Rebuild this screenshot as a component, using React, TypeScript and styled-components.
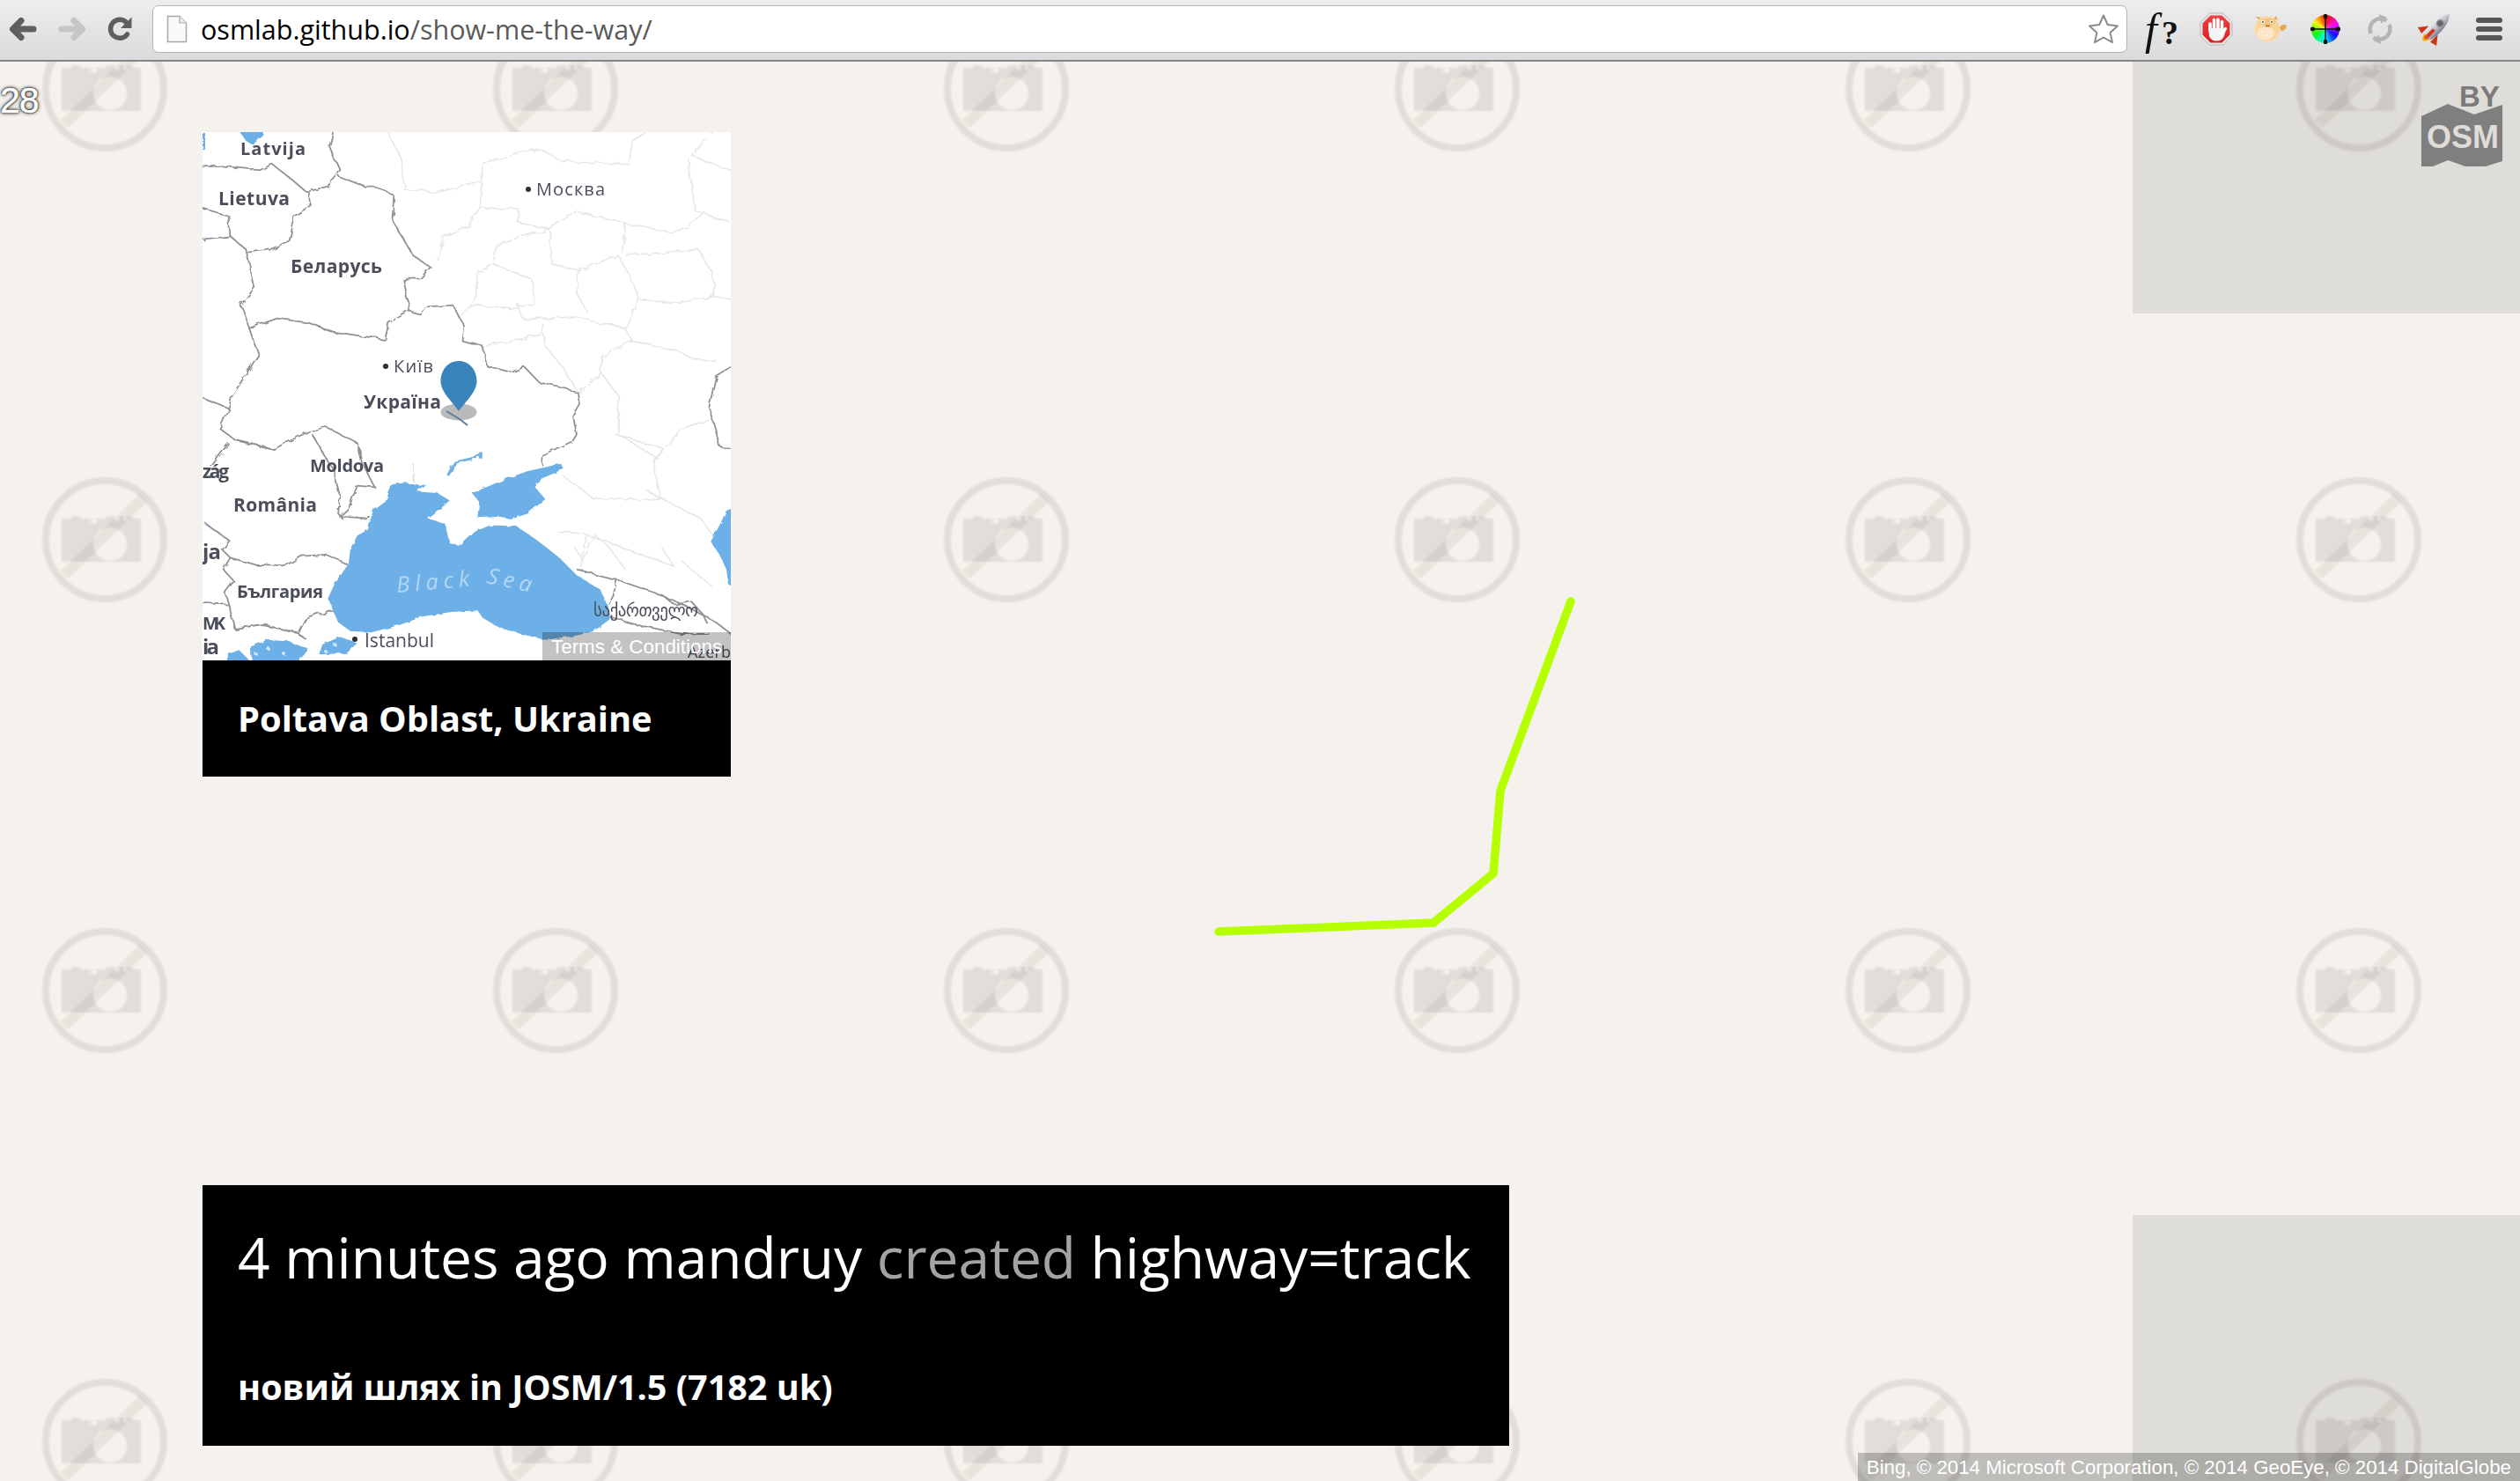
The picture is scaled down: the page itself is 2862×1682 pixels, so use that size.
import React from "react";
import styled, { createGlobalStyle } from "styled-components";

const GlobalStyle = createGlobalStyle`
  html, body { margin: 0; padding: 0; background: #f5f2ed; }
  body { font-family: "Open Sans", "Noto Sans", sans-serif; overflow: hidden; }
`;

const Page = styled.div`
  width: 100%;
  height: 100vh;
  display: flex;
  flex-direction: column;
  overflow: hidden;
`;

/* ---------- browser chrome ---------- */
const Toolbar = styled.header`
  box-sizing: border-box;
  height: 70px;
  flex: none;
  display: flex;
  align-items: center;
  padding: 0 4px 2px 10px;
  background: linear-gradient(#ededed, #dbdbdb);
  border-bottom: 2px solid #858585;
`;
const NavGroup = styled.nav`
  display: flex;
  align-items: center;
  gap: 24px;
  flex: none;
`;
const NavIcon = styled.svg`
  display: block;
  flex: none;
`;
const UrlBox = styled.div`
  box-sizing: border-box;
  flex: 1;
  height: 54px;
  margin: 0 8px 0 23px;
  display: flex;
  align-items: center;
  padding: 0 8px 0 15px;
  background: #fff;
  border: 1.5px solid #b4b4b4;
  border-radius: 7px;
`;
const UrlText = styled.div`
  flex: 1;
  margin-left: 15px;
  font-size: 30.5px;
  white-space: nowrap;
  color: #5a5a5a;
  b { font-weight: 400; color: #000; }
`;
const ExtSlot = styled.div`
  width: 62px;
  height: 54px;
  flex: none;
  display: flex;
  align-items: center;
  justify-content: center;
`;
const FunctionGlyph = styled.span`
  font-family: "Liberation Serif", serif;
  font-size: 50px;
  line-height: 1;
  color: #111;
  white-space: nowrap;
  i { font-style: italic; margin-right: 5px; }
  b { font-size: 38px; font-weight: 700; }
`;
const MenuIcon = styled.div`
  display: flex;
  flex-direction: column;
  gap: 4px;
  width: 30px;
`;
const MenuBar = styled.span`
  height: 6px;
  border-radius: 3px;
  background: #565656;
`;

/* ---------- map area ---------- */
const Viewport = styled.main`
  position: relative;
  flex: 1;
  min-height: 0;
  background: #f5f2ed;
`;
const FullLayer = styled.svg`
  position: absolute;
  left: 0;
  top: 0;
  width: 100%;
  height: 100%;
  pointer-events: none;
`;
const Content = styled.div`
  position: relative;
  height: 100%;
  display: flex;
  justify-content: space-between;
`;
const LeftColumn = styled.div`
  box-sizing: border-box;
  display: flex;
  flex-direction: column;
  justify-content: space-between;
  align-items: flex-start;
  padding: 80px 0 40px 230px;
`;
const SideStrip = styled.aside`
  width: 440px;
  display: flex;
  flex-direction: column;
  justify-content: space-between;
`;
const SidePanel = styled.div<{ $h: number }>`
  height: ${(p) => p.$h}px;
  background: rgba(0, 0, 0, 0.085);
`;
const Counter = styled.div`
  position: absolute;
  left: 0;
  top: 22px;
  font-family: "Liberation Sans", Arial, sans-serif;
  font-size: 41px;
  line-height: 44px;
  letter-spacing: -1px;
  color: #fff;
  -webkit-text-stroke: 0.5px #fff;
  text-shadow: 0 0 2px #000, 0 0 3px #000, 0 0 5px rgba(0, 0, 0, 0.7);
`;
const LogoMark = styled.svg`
  position: absolute;
  right: 20px;
  top: 18px;
`;
const Attribution = styled.div`
  position: absolute;
  right: 0;
  bottom: 0;
  box-sizing: border-box;
  height: 32px;
  padding: 2px 10px 0;
  display: flex;
  align-items: center;
  background: rgba(0, 0, 0, 0.22);
  color: #fff;
  font-family: "Liberation Sans", Arial, sans-serif;
  font-size: 22.3px;
  white-space: nowrap;
`;

/* ---------- location card ---------- */
const LocationCard = styled.section`
  width: 600px;
`;
const MapBox = styled.div`
  position: relative;
  width: 600px;
  height: 600px;
  overflow: hidden;
  background: #fff;
`;
const MapDrawing = styled.svg`
  display: block;
`;
const MapLabel = styled.text<{ $weight?: number }>`
  font-family: "Open Sans", sans-serif;
  font-weight: ${(p) => p.$weight ?? 700};
  fill: #4b4e5a;
`;
const GeorgianLabel = styled.text`
  font-family: "DejaVu Sans", sans-serif;
  fill: #4b4e5a;
`;
const SeaLabel = styled.text`
  font-family: "Open Sans", sans-serif;
  font-style: italic;
  fill: #b4d8f3;
`;
const TermsLink = styled.div`
  position: absolute;
  right: 0;
  bottom: 0;
  width: 214px;
  height: 32px;
  box-sizing: border-box;
  padding: 2px 0 0 10px;
  display: flex;
  align-items: center;
  background: rgba(0, 0, 0, 0.24);
  color: #fff;
  font-family: "Liberation Sans", Arial, sans-serif;
  font-size: 22.4px;
  white-space: nowrap;
`;
const PlaceCaption = styled.h2`
  box-sizing: border-box;
  margin: 0;
  height: 132px;
  padding: 0 40px 2px;
  display: flex;
  align-items: center;
  background: #000;
  color: #fff;
  font-size: 39.8px;
  font-weight: 700;
  white-space: nowrap;
`;

/* ---------- change card ---------- */
const ChangeCard = styled.section`
  box-sizing: border-box;
  width: 1484px;
  height: 296px;
  padding: 38px 40px 0;
  background: #000;
  color: #fff;
`;
const ChangeTitle = styled.h1`
  margin: 0;
  font-size: 64px;
  line-height: 88px;
  font-weight: 400;
  white-space: nowrap;
`;
const Verb = styled.span`
  color: #a3a3a3;
`;
const ChangeMeta = styled.p`
  margin: 76px 0 0;
  font-size: 39.5px;
  line-height: 54px;
  font-weight: 700;
  white-space: nowrap;
`;

/* ---------- data for the drawings ---------- */
type Pt = [number, number];
// points are read from crops of the reference: one for the north of the map, one for the south
const north = (pts: Pt[]) => pts.map(([x, y]) => `${(x / 2.529 - 10).toFixed(1)},${(y / 3 - 10).toFixed(1)}`).join(" ");
const south = (pts: Pt[]) => pts.map(([x, y]) => `${(x / 2.529 - 10).toFixed(1)},${(y / 3 + 330).toFixed(1)}`).join(" ");

const darkNorth: Pt[][] = [
  [[400, 30], [390, 80], [420, 160], [410, 180], [385, 215], [330, 232]],
  [[0, 150], [80, 145], [150, 155], [190, 160], [225, 140], [270, 180], [320, 230], [330, 232]],
  [[330, 232], [335, 285], [290, 320], [275, 400], [220, 430], [155, 440]],
  [[25, 290], [100, 315], [105, 385], [25, 395]],
  [[105, 385], [150, 430], [175, 560], [135, 620], [160, 700], [185, 790], [110, 930], [100, 970], [75, 1040]],
  [[415, 180], [490, 215], [520, 215], [575, 245], [570, 330], [630, 450], [680, 490], [650, 530], [600, 530], [620, 640]],
  [[155, 700], [240, 665], [330, 680], [400, 710], [480, 725], [550, 735], [560, 680], [620, 640], [650, 650], [665, 625], [745, 620], [775, 690], [770, 740], [830, 760], [845, 830], [910, 850], [950, 830], [990, 880], [1060, 900], [1105, 920], [1110, 960], [1090, 1000], [1100, 1060], [1085, 1090], [1000, 1135], [1000, 1165]],
  [[75, 1040], [120, 1080], [230, 1110], [330, 1050], [380, 1035], [470, 1090], [480, 1140]],
  [[25, 935], [100, 970]],
  [[100, 1090], [50, 1170]],
  [[1543, 830], [1500, 860], [1480, 970], [1500, 1050], [1510, 1100], [1543, 1110]],
];
const darkSouth: Pt[][] = [
  [[340, 40], [400, 160], [420, 250], [415, 310], [430, 330]],
  [[470, 80], [480, 130], [520, 220], [470, 215], [445, 290], [420, 320], [490, 325], [505, 320]],
  [[30, 340], [100, 400], [80, 430], [105, 460], [180, 485], [260, 490], [310, 455], [380, 450], [440, 480]],
  [[105, 460], [85, 500], [115, 540], [90, 580], [100, 620], [115, 680], [120, 705], [200, 690], [300, 715], [320, 670], [390, 640], [410, 650]],
  [[25, 615], [100, 620]],
  [[320, 670], [300, 720], [325, 740]],
  [[1100, 500], [1215, 535], [1300, 570], [1350, 590], [1440, 640], [1500, 680], [1543, 720]],
  [[1190, 660], [1300, 695], [1400, 720], [1480, 720]],
  [[1215, 535], [1205, 590], [1190, 620]],
  [[1350, 590], [1380, 620], [1430, 610], [1460, 650], [1480, 690]],
];
const lightNorth: Pt[][] = [
  [[560, 30], [600, 130], [605, 225], [700, 235], [825, 200], [830, 140], [930, 100], [1000, 90], [1060, 130], [1250, 140], [1260, 60], [1300, 30]],
  [[830, 200], [825, 290], [790, 350], [720, 390], [700, 470]],
  [[825, 290], [930, 290], [935, 340], [1020, 360], [1030, 480], [1105, 500], [1220, 450], [1280, 590], [1240, 700], [1260, 740], [1400, 780], [1430, 800], [1500, 810]],
  [[1020, 360], [1100, 300], [1240, 340], [1230, 440]],
  [[1240, 340], [1380, 375], [1470, 310], [1543, 340]],
  [[1240, 450], [1450, 430], [1490, 510], [1495, 590], [1543, 600]],
  [[1280, 600], [1400, 610], [1495, 590]],
  [[870, 410], [1020, 360]],
  [[870, 410], [860, 480], [815, 510], [810, 590], [775, 660]],
  [[860, 480], [970, 530], [980, 620], [930, 620], [945, 665], [1100, 660], [1240, 700]],
  [[1105, 500], [1100, 580], [1135, 650]],
  [[790, 620], [930, 630]],
  [[1000, 680], [1010, 760], [1060, 830], [1105, 920]],
  [[840, 760], [1000, 720]],
  [[1175, 790], [1170, 850], [1105, 920]],
  [[1175, 790], [1260, 740]],
  [[1170, 850], [1220, 930], [1220, 1060], [1330, 1140], [1400, 1040], [1480, 1010]],
  [[1420, 120], [1440, 300], [1470, 310]],
  [[1490, 30], [1430, 110], [1543, 160]],
];
const lightSouth: Pt[][] = [
  [[1060, 180], [1150, 260], [1340, 260], [1320, 130], [1350, 90], [1210, 40]],
  [[1340, 260], [1300, 230], [1460, 330], [1500, 400]],
  [[1040, 370], [1130, 380], [1110, 500]],
  [[1130, 380], [1240, 430], [1380, 490], [1340, 420]],
  [[1090, 420], [1120, 470], [1150, 380], [1190, 420], [1240, 500]],
  [[1400, 470], [1490, 560]],
];
const blackSea: Pt[] = [
  [570, 210], [610, 205], [650, 215], [668, 208], [640, 235], [700, 240], [735, 265], [720, 282], [670, 325], [722, 345], [735, 410], [760, 420], [800, 375], [850, 350], [880, 350], [930, 355], [985, 400], [1050, 460], [1100, 520], [1170, 570], [1190, 630], [1195, 670], [1150, 710], [1100, 725], [1010, 740], [940, 720], [880, 700], [830, 665], [815, 640], [740, 645], [660, 660], [590, 690], [510, 715], [450, 710], [415, 680], [385, 600], [405, 550], [445, 480], [450, 430], [470, 385], [500, 365], [515, 300], [550, 270],
];
const azov: Pt[] = [
  [1055, 140], [960, 165], [900, 190], [830, 225], [800, 240], [820, 270], [815, 325], [880, 320], [910, 330], [960, 310], [1010, 260], [980, 220], [1000, 190], [1040, 170], [1060, 155],
];
const marmaraEast: Pt[] = [[370, 755], [420, 730], [470, 750], [440, 785], [360, 790]];
const marmaraWest: Pt[] = [[160, 765], [210, 740], [270, 745], [330, 772], [300, 815], [170, 815]];
const aegean: Pt[] = [[98, 790], [130, 775], [165, 815], [98, 815]];
const caspian: Pt[] = [[1560, 285], [1530, 300], [1510, 350], [1485, 405], [1510, 450], [1530, 500], [1535, 550], [1560, 570]];
const riga: Pt[] = [[128, 20], [150, 60], [170, 72], [200, 42], [205, 20]];
const dnipro: Pt[] = [[730, 180], [750, 135], [800, 122], [825, 105]];

const labels: { t: string; x: number; y: number; s: number; w: number; weight?: number }[] = [
  { t: "Latvija", x: 43, y: 26, s: 20, w: 74 },
  { t: "Lietuva", x: 18, y: 83, s: 21, w: 81 },
  { t: "Беларусь", x: 100, y: 160, s: 21, w: 104 },
  { t: "Москва", x: 379, y: 72, s: 20, w: 78, weight: 400 },
  { t: "Київ", x: 217, y: 273, s: 20, w: 45, weight: 400 },
  { t: "Україна", x: 183, y: 314, s: 21, w: 88 },
  { t: "Moldova", x: 122, y: 386, s: 20, w: 84 },
  { t: "zág", x: 0, y: 393, s: 21, w: 30 },
  { t: "România", x: 35, y: 431, s: 21, w: 95 },
  { t: "ja", x: 0, y: 485, s: 24, w: 21 },
  { t: "България", x: 39, y: 529, s: 20, w: 98 },
  { t: "MK", x: 0, y: 565, s: 20, w: 26 },
  { t: "ia", x: 0, y: 593, s: 24, w: 19 },
  { t: "Istanbul", x: 184, y: 585, s: 21, w: 79, weight: 400 },
];
const dots: Pt[] = [[370, 65], [208, 266], [173, 576]];
const islands: Pt[] = [[74, 586], [92, 592], [60, 592], [150, 582], [140, 590]];
const wheelSectors = Array.from({ length: 36 }, (_, i) => i * 10);

const wedge = (deg: number, r: number) => {
  const a = ((deg - 5.6) * Math.PI) / 180;
  const b = ((deg + 5.6) * Math.PI) / 180;
  const p = (t: number) => `${(18 + r * Math.sin(t)).toFixed(2)} ${(18 - r * Math.cos(t)).toFixed(2)}`;
  return `M18 18L${p(a)}L${p(b)}Z`;
};

/* ---------- icons ---------- */
const BackIcon = ({ color }: { color: string }) => (
  <NavIcon width="32" height="28" viewBox="0 0 32 28">
    <path d="M28 14H6M14 4.500 4.500 14l9.500 9.500" fill="none" stroke={color} strokeWidth="7" strokeLinecap="round" strokeLinejoin="round" />
  </NavIcon>
);
const ForwardIcon = ({ color }: { color: string }) => (
  <NavIcon width="32" height="28" viewBox="0 0 32 28">
    <path d="M4 14h22M18 4.500 27.500 14 18 23.500" fill="none" stroke={color} strokeWidth="7" strokeLinecap="round" strokeLinejoin="round" />
  </NavIcon>
);
const ReloadIcon = () => (
  <NavIcon width="28" height="28" viewBox="0 0 28 28">
    <path d="M21.500 6.500A10.500 10.500 0 1 0 22.500 20" fill="none" stroke="#5e5e5e" strokeWidth="5.500" strokeLinecap="round" />
    <path d="M27.500 0.500V13H15Z" fill="#5e5e5e" />
  </NavIcon>
);
const PageIcon = () => (
  <NavIcon width="24" height="32" viewBox="0 0 24 32">
    <path d="M1.500 1.500H15L22.500 9V30.500H1.500Z" fill="#fafafa" stroke="#a9a9a9" strokeWidth="1.500" />
    <path d="M15 1.500V9H22.500" fill="#eee" stroke="#a9a9a9" strokeWidth="1.200" />
  </NavIcon>
);
const StarIcon = () => (
  <NavIcon width="36" height="36" viewBox="0 0 36 36">
    <path d="M18 2.500 22.700 13 34 14.400 25.600 22 28 33.200 18 27.500 8 33.200 10.400 22 2 14.400 13.300 13Z" fill="#fff" stroke="#8b8b8b" strokeWidth="2" strokeLinejoin="round" />
  </NavIcon>
);
const AdblockIcon = () => (
  <NavIcon width="38" height="38" viewBox="0 0 38 38">
    <defs>
      <linearGradient id="abp" x1="0" y1="0" x2="0" y2="1">
        <stop offset="0" stopColor="#f04040" />
        <stop offset="1" stopColor="#d91e20" />
      </linearGradient>
    </defs>
    <path d="M11.500 1H26.500L37 11.500V26.500L26.500 37H11.500L1 26.500V11.500Z" fill="#e8e8e8" stroke="#b5b5b5" strokeWidth="1" />
    <path d="M12.500 3.500H25.500L34.500 12.500V25.500L25.500 34.500H12.500L3.500 25.500V12.500Z" fill="url(#abp)" />
    <path d="M12 21V13M16.500 20V8.500M21 20V8M25.500 21V10.500" stroke="#fff" strokeWidth="3.600" strokeLinecap="round" />
    <path d="M10.300 18H27.300V21L31 17.500 27.500 28C26 31 23 32.500 19.500 32.500 15 32.500 12.500 30.500 11 27Z" fill="#f4f4f4" />
    <path d="M25 24 L29.500 18.500" stroke="#fff" strokeWidth="3.400" strokeLinecap="round" />
  </NavIcon>
);
const PufferIcon = () => (
  <NavIcon width="38" height="32" viewBox="0 0 38 32">
    <path d="M28 14Q33 9 37 12 36 18 31 18Z" fill="#e6a44d" />
    <path d="M5 5 2 2 9 3ZM22 5 25 1 27 6Z" fill="#e6a44d" />
    <circle cx="15" cy="16" r="14" fill="#fbd49b" stroke="#f8dca9" strokeWidth="2" strokeDasharray="1.500 1.500" />
    <ellipse cx="13" cy="21" rx="10" ry="7.500" fill="#fde6c6" />
    <ellipse cx="16" cy="8" rx="9" ry="4" fill="#f5c27b" />
    <circle cx="10" cy="8" r="2" fill="#fff" />
    <circle cx="20" cy="8" r="2" fill="#fff" />
    <circle cx="10" cy="8" r="1" fill="#553" />
    <circle cx="20" cy="8" r="1" fill="#553" />
    <path d="M13 12.500h5" stroke="#a56a20" strokeWidth="1.400" />
    <circle cx="9" cy="19" r="0.900" fill="#fff" />
    <circle cx="14" cy="23" r="0.900" fill="#fff" />
    <circle cx="18" cy="19" r="0.900" fill="#fff" />
  </NavIcon>
);
const WheelIcon = () => (
  <NavIcon width="36" height="36" viewBox="0 0 36 36">
    {wheelSectors.map((deg) => (
      <path key={deg} d={wedge(deg, 16)} fill={`hsl(${(360 - deg + 5) % 360} 95% 50%)`} />
    ))}
    <path d="M18 3V33M3 18H33" stroke="#111" strokeWidth="1.400" />
    <rect x="15.800" y="1" width="4.400" height="5" rx="1.500" fill="#111" />
    <rect x="15.800" y="30" width="4.400" height="5" rx="1.500" fill="#111" />
    <rect x="1" y="15.800" width="5" height="4.400" rx="1.500" fill="#111" />
    <rect x="30" y="15.800" width="5" height="4.400" rx="1.500" fill="#111" />
  </NavIcon>
);
const SyncIcon = () => (
  <NavIcon width="34" height="38" viewBox="0 0 34 38">
    <path d="M24.500 9.500A12 12 0 0 0 6.500 24M9.500 28.500A12 12 0 0 0 27.500 14" fill="none" stroke="#b4b4b4" strokeWidth="4.600" />
    <path d="M15.500 2 24.500 5.500 18.500 13ZM18.500 36 9.500 32.500 15.500 25Z" fill="#b4b4b4" />
  </NavIcon>
);
const RocketIcon = () => (
  <NavIcon width="42" height="42" viewBox="0 0 42 42">
    <defs>
      <linearGradient id="rocketBody" x1="0" y1="0" x2="1" y2="0">
        <stop offset="0" stopColor="#eeeef2" />
        <stop offset="0.5" stopColor="#c4c5cc" />
        <stop offset="1" stopColor="#77788a" />
      </linearGradient>
    </defs>
    <g transform="rotate(45 21 21)">
      <path d="M14 23 6 33 14 35ZM28 23 36 33 28 35Z" fill="#c8361c" />
      <path d="M16 33Q21 46 26 33Z" fill="#f3b21f" />
      <path d="M18 33Q21 41 24 33Z" fill="#e2501c" />
      <path d="M21 -3C28 5 30 18 26.500 33H15.500C12 18 14 5 21 -3Z" fill="url(#rocketBody)" />
      <circle cx="21" cy="12" r="4" fill="#666" stroke="#999" strokeWidth="1.500" />
      <path d="M21 22V33" stroke="#d8361c" strokeWidth="4" />
    </g>
  </NavIcon>
);

/* ---------- app ---------- */
export default function App() {
  return (
    <Page>
      <GlobalStyle />
      <Toolbar>
        <NavGroup>
          <BackIcon color="#5f5f5f" />
          <ForwardIcon color="#c6c6c6" />
          <ReloadIcon />
        </NavGroup>
        <UrlBox>
          <PageIcon />
          <UrlText>
            <b>osmlab.github.io</b>/show-me-the-way/
          </UrlText>
          <StarIcon />
        </UrlBox>
        <ExtSlot>
          <FunctionGlyph>
            <i>f</i>
            <b>?</b>
          </FunctionGlyph>
        </ExtSlot>
        <ExtSlot>
          <AdblockIcon />
        </ExtSlot>
        <ExtSlot>
          <PufferIcon />
        </ExtSlot>
        <ExtSlot>
          <WheelIcon />
        </ExtSlot>
        <ExtSlot>
          <SyncIcon />
        </ExtSlot>
        <ExtSlot>
          <RocketIcon />
        </ExtSlot>
        <ExtSlot>
          <MenuIcon>
            <MenuBar />
            <MenuBar />
            <MenuBar />
          </MenuIcon>
        </ExtSlot>
      </Toolbar>

      <Viewport>
        <FullLayer>
          <defs>
            <filter id="tileSoft">
              <feGaussianBlur stdDeviation="0.8" />
            </filter>
            <pattern id="tile" width="512" height="512" patternUnits="userSpaceOnUse" patternTransform="translate(-137 -225)">
              <g filter="url(#tileSoft)">
                <circle cx="256" cy="256" r="67" fill="none" stroke="#e1ded9" strokeWidth="8" />
                <path d="M207 232h10l2-3h8l3 3h25l4-3h25l10 3h3v49H207Z" fill="#e1ded9" />
                <circle cx="262" cy="261" r="19" fill="#f5f2ed" />
                <rect x="240" y="233" width="7" height="4" fill="#f5f2ed" />
                <circle cx="270" cy="232" r="3" fill="#f5f2ed" />
                <circle cx="279" cy="232" r="2.500" fill="#f5f2ed" />
                <path d="M210 296 300 208" stroke="rgba(60,50,40,0.08)" strokeWidth="12" />
              </g>
            </pattern>
          </defs>
          <rect width="100%" height="100%" fill="url(#tile)" />
        </FullLayer>

        <Content>
          <LeftColumn>
            <LocationCard>
              <MapBox>
                <MapDrawing width="600" height="600" viewBox="0 0 600 600">
                  <defs>
                    <filter id="mapSoft" x="-2%" y="-2%" width="104%" height="104%">
                      <feGaussianBlur stdDeviation="0.6" />
                    </filter>
                    <filter id="wiggle" x="-2%" y="-2%" width="104%" height="104%">
                      <feTurbulence type="fractalNoise" baseFrequency="0.09" numOctaves="2" seed="4" />
                      <feDisplacementMap in="SourceGraphic" scale="7" />
                      <feGaussianBlur stdDeviation="0.5" />
                    </filter>
                    <filter id="coast" x="-2%" y="-2%" width="104%" height="104%">
                      <feTurbulence type="fractalNoise" baseFrequency="0.12" numOctaves="2" seed="9" />
                      <feDisplacementMap in="SourceGraphic" scale="4" />
                      <feGaussianBlur stdDeviation="0.5" />
                    </filter>
                  </defs>
                  <g filter="url(#wiggle)" fill="none" strokeLinejoin="round">
                    <g stroke="#e6e6e6" strokeWidth="1.500">
                      {lightNorth.map((p, i) => (
                        <polyline key={i} points={north(p)} />
                      ))}
                      {lightSouth.map((p, i) => (
                        <polyline key={i} points={south(p)} />
                      ))}
                    </g>
                    <g stroke="#8f9194" strokeWidth="1.800">
                      {darkNorth.map((p, i) => (
                        <polyline key={i} points={north(p)} />
                      ))}
                      {darkSouth.map((p, i) => (
                        <polyline key={i} points={south(p)} />
                      ))}
                    </g>
                  </g>
                  <g filter="url(#coast)" fill="#6cb0e7">
                    <polygon points={south(blackSea)} />
                    <polygon points={south(azov)} />
                    <polygon points={south(marmaraEast)} />
                    <polygon points={south(marmaraWest)} />
                    <polygon points={south(aegean)} />
                    <polygon points={south(caspian)} />
                    <polygon points={north(riga)} />
                    <rect x="0" y="0" width="2" height="20" />
                    <polyline points={south(dnipro)} fill="none" stroke="#6fb0e4" strokeWidth="3" />
                    <polyline points={south([[825, 100], [825, 125]])} fill="none" stroke="#6fb0e4" strokeWidth="3" />
                    <polyline points={south([[630, 140], [632, 205]])} fill="none" stroke="#c5ddf0" strokeWidth="1.500" />
                    {islands.map(([x, y], i) => (
                      <circle key={i} cx={x} cy={y} r="2" fill="#cfe6f8" />
                    ))}
                  </g>
                  <g filter="url(#mapSoft)">
                    {labels.map((l) => (
                      <MapLabel key={l.t} x={l.x} y={l.y} fontSize={l.s} textLength={l.w} $weight={l.weight}>
                        {l.t}
                      </MapLabel>
                    ))}
                    {dots.map(([x, y], i) => (
                      <circle key={i} cx={x} cy={y} r="3" fill="#2e2f38" />
                    ))}
                    <GeorgianLabel x="444" y="550" fontSize="19" textLength="119">
                      საქართველო
                    </GeorgianLabel>
                    <MapLabel x="551" y="597" fontSize="18" textLength="49" $weight={400}>
                      Azerb
                    </MapLabel>
                    <SeaLabel x="221" y="523" fontSize="25" letterSpacing="6" transform="rotate(-5 221 523)">
                      Black
                    </SeaLabel>
                    <SeaLabel x="322" y="512" fontSize="25" letterSpacing="6" transform="rotate(12 322 512)">
                      Sea
                    </SeaLabel>
                  </g>
                  <ellipse cx="291" cy="318" rx="20.500" ry="9.500" fill="rgba(40,40,40,0.32)" />
                  <path d="M277 317 292 326 301 333" stroke="#5b7f9e" strokeWidth="2" fill="none" />
                  <path d="M291 260C303 260 311.500 270 311.500 283 311.500 295 298 307 291 317 284 307 270.500 295 270.500 283 270.500 270 279 260 291 260Z" fill="#3a84bd" />
                </MapDrawing>
                <TermsLink>Terms &amp; Conditions</TermsLink>
              </MapBox>
              <PlaceCaption>Poltava Oblast, Ukraine</PlaceCaption>
            </LocationCard>

            <ChangeCard>
              <ChangeTitle>
                4 minutes ago mandruy <Verb>created</Verb> highway=track
              </ChangeTitle>
              <ChangeMeta>новий шлях in JOSM/1.5 (7182 uk)</ChangeMeta>
            </ChangeCard>
          </LeftColumn>

          <SideStrip>
            <SidePanel $h={286} />
            <SidePanel $h={302} />
          </SideStrip>
        </Content>

        <FullLayer>
          <polyline
            points="1384,988 1628,978 1696,922 1704,828 1784,613"
            fill="none"
            stroke="#b6ff00"
            strokeWidth="9.500"
            strokeLinecap="round"
            strokeLinejoin="miter"
          />
        </FullLayer>

        <Counter>28</Counter>
        <LogoMark width="92" height="101" viewBox="0 -10 92 101">
          <path d="M0 34 30 20 60 32 92 21V85L73 91H50L30 84 13 91H0Z" fill="#7f7f7f" />
          <text x="43" y="23" fontFamily="'Liberation Sans', sans-serif" fontWeight="700" fontSize="33" fill="#7a7a7a">BY</text>
          <text x="6" y="70" fontFamily="'Liberation Sans', sans-serif" fontWeight="700" fontSize="36" fill="#e0ddd8" textLength="82">OSM</text>
        </LogoMark>
        <Attribution>Bing, © 2014 Microsoft Corporation, © 2014 GeoEye, © 2014 DigitalGlobe</Attribution>
      </Viewport>
    </Page>
  );
}
